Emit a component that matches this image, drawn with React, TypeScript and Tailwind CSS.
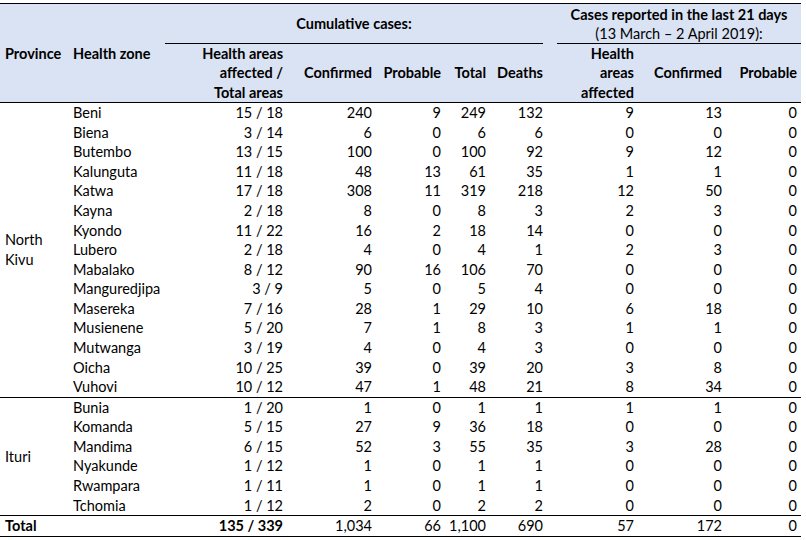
import React from 'react';

type Row = [string, string, string, string, string, string, string, string, string];

const northKivu: Row[] = [
  ['Beni', '15 / 18', '240', '9', '249', '132', '9', '13', '0'],
  ['Biena', '3 / 14', '6', '0', '6', '6', '0', '0', '0'],
  ['Butembo', '13 / 15', '100', '0', '100', '92', '9', '12', '0'],
  ['Kalunguta', '11 / 18', '48', '13', '61', '35', '1', '1', '0'],
  ['Katwa', '17 / 18', '308', '11', '319', '218', '12', '50', '0'],
  ['Kayna', '2 / 18', '8', '0', '8', '3', '2', '3', '0'],
  ['Kyondo', '11 / 22', '16', '2', '18', '14', '0', '0', '0'],
  ['Lubero', '2 / 18', '4', '0', '4', '1', '2', '3', '0'],
  ['Mabalako', '8 / 12', '90', '16', '106', '70', '0', '0', '0'],
  ['Manguredjipa', '3 / 9', '5', '0', '5', '4', '0', '0', '0'],
  ['Masereka', '7 / 16', '28', '1', '29', '10', '6', '18', '0'],
  ['Musienene', '5 / 20', '7', '1', '8', '3', '1', '1', '0'],
  ['Mutwanga', '3 / 19', '4', '0', '4', '3', '0', '0', '0'],
  ['Oicha', '10 / 25', '39', '0', '39', '20', '3', '8', '0'],
  ['Vuhovi', '10 / 12', '47', '1', '48', '21', '8', '34', '0'],
];

const ituri: Row[] = [
  ['Bunia', '1 / 20', '1', '0', '1', '1', '1', '1', '0'],
  ['Komanda', '5 / 15', '27', '9', '36', '18', '0', '0', '0'],
  ['Mandima', '6 / 15', '52', '3', '55', '35', '3', '28', '0'],
  ['Nyakunde', '1 / 12', '1', '0', '1', '1', '0', '0', '0'],
  ['Rwampara', '1 / 11', '1', '0', '1', '1', '0', '0', '0'],
  ['Tchomia', '1 / 12', '2', '0', '2', '2', '0', '0', '0'],
];

const widths = [68, 97, 122, 89, 69, 45, 57, 91, 88, 75];

function DataCells({ row }: { row: Row }) {
  return (
    <>
      <td className="pl-[5px]">{row[0]}</td>
      {row.slice(1).map((v, i) => (
        <td key={i} className="pr-[4px] text-right">
          {v}
        </td>
      ))}
    </>
  );
}

function Group({ name, rows }: { name: React.ReactNode; rows: Row[] }) {
  return (
    <>
      {rows.map((r, i) => (
        <tr key={r[0]} className={i === 0 ? 'h-[20px] border-t border-black' : 'h-[19.6px]'}>
          {i === 0 && (
            <td rowSpan={rows.length} className="pl-[5px] align-middle">
              {name}
            </td>
          )}
          <DataCells row={r} />
        </tr>
      ))}
    </>
  );
}

export default function App() {
  return (
    <div className="bg-white pt-[3px] text-[14.5px] leading-[19.5px] text-black font-['Lato','Liberation_Sans',sans-serif]">
      <table className="table-fixed border-collapse w-[801px]">
        <colgroup>
          {widths.map((w, i) => (
            <col key={i} style={{ width: w }} />
          ))}
        </colgroup>
        <thead className="bg-[#dae3f3] font-bold">
          <tr className="h-[40px] border-t border-black">
            <th colSpan={2} className="p-0" />
            <th colSpan={5} className="p-0 align-bottom">
              <div className="mr-[4px] flex h-[39px] items-center justify-center border-b border-black">
                Cumulative cases:
              </div>
            </th>
            <th colSpan={3} className="p-0 align-bottom">
              <div className="ml-[10px] h-[39px] border-b border-black text-center">
                <div>Cases reported in the last 21 days</div>
                <div className="font-normal">(13 March – 2 April 2019):</div>
              </div>
            </th>
          </tr>
          <tr className="h-[57px] border-b border-black">
            <th className="pl-[5px] text-left align-top">Province</th>
            <th className="pl-[5px] text-left align-top">Health zone</th>
            <th className="pr-[4px] text-right align-top">
              Health areas
              <br />
              affected /
              <br />
              Total areas
            </th>
            <th className="pr-[4px] text-right align-middle">Confirmed</th>
            <th className="pr-[4px] text-right align-middle">Probable</th>
            <th className="pr-[4px] text-right align-middle">Total</th>
            <th className="pr-[4px] text-right align-middle">Deaths</th>
            <th className="pr-[4px] text-right align-top">
              Health
              <br />
              areas
              <br />
              affected
            </th>
            <th className="pr-[4px] text-right align-middle">Confirmed</th>
            <th className="pr-[4px] text-right align-middle">Probable</th>
          </tr>
        </thead>
        <tbody>
          <Group
            name={
              <>
                North
                <br />
                Kivu
              </>
            }
            rows={northKivu}
          />
          <Group name="Ituri" rows={ituri} />
          <tr className="h-[20px] border-y border-black">
            <td className="pl-[5px] font-bold">Total</td>
            <td />
            <td className="pr-[4px] text-right font-bold">135 / 339</td>
            <td className="pr-[4px] text-right">1,034</td>
            <td className="pr-[4px] text-right">66</td>
            <td className="pr-[4px] text-right">1,100</td>
            <td className="pr-[4px] text-right">690</td>
            <td className="pr-[4px] text-right">57</td>
            <td className="pr-[4px] text-right">172</td>
            <td className="pr-[4px] text-right">0</td>
          </tr>
        </tbody>
      </table>
    </div>
  );
}
